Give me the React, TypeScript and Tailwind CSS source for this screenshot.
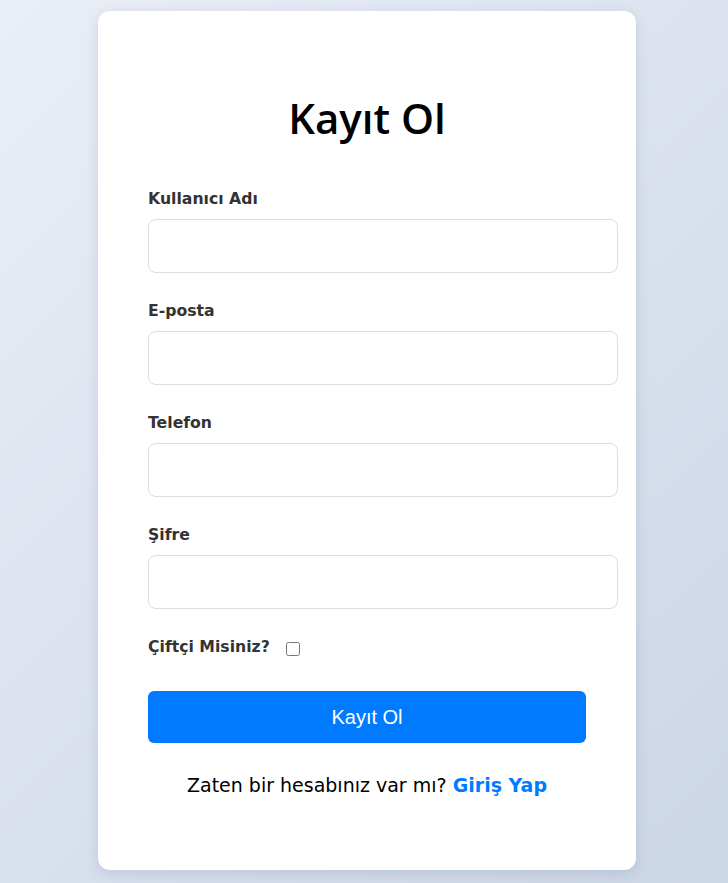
import { useState } from "react";

const fields = [
  { label: "Kullanıcı Adı", type: "text" },
  { label: "E-posta", type: "email" },
  { label: "Telefon", type: "tel" },
  { label: "Şifre", type: "password" },
];

const App = () => {
  const [farmer, setFarmer] = useState(false);

  return (
    <div className="min-h-screen w-full flex items-start justify-center pt-[11px] pl-[6px] bg-[linear-gradient(135deg,#eaeef6_0%,#cbd6e6_100%)] font-['DejaVu_Sans',sans-serif]">
      <div className="w-[538px] bg-white rounded-[12px] shadow-[0_4px_14px_rgba(80,100,140,0.18)] px-[50px] pt-[50px] pb-[51px]">
        <form className="flex flex-col" onSubmit={(e) => e.preventDefault()}>
          <h2 className="mt-[33px] mb-[45px] text-center text-[42px] leading-[48px] font-semibold text-black font-['Open_Sans',sans-serif]">
            Kayıt Ol
          </h2>

          {/* input groups */}
          {fields.map((field) => (
            <div key={field.label} className="flex flex-col mb-[26px]">
              <label className="text-[15.7px] leading-[24px] font-semibold text-[#333] mb-2">
                {field.label}
              </label>
              <input
                type={field.type}
                className="w-[470px] h-[54px] px-[15px] border border-[#dddddd] rounded-[8px] outline-none focus:border-[#007bff]"
              />
            </div>
          ))}

          <div className="flex items-center h-[24px]">
            <label className="text-[15.7px] leading-[24px] font-semibold text-[#333]">
              Çiftçi Misiniz?
            </label>
            <input
              type="checkbox"
              checked={farmer}
              onChange={() => setFarmer(!farmer)}
              className="ml-[16px] w-[14px] h-[14px] mt-[3px]"
            />
          </div>

          <button
            type="submit"
            className="mt-[32px] h-[52px] w-full bg-[#007bff] hover:bg-[#0069d9] text-white text-[20px] rounded-[6px] font-['Liberation_Sans',Arial,sans-serif] cursor-pointer"
          >
            Kayıt Ol
          </button>

          <p className="mt-[27px] mb-[19px] text-center text-[19px] leading-[30px] text-black">
            Zaten bir hesabınız var mı?{" "}
            <a href="#" className="text-[#007bff] font-semibold">
              Giriş Yap
            </a>
          </p>
        </form>
      </div>
    </div>
  );
};

export default App;
